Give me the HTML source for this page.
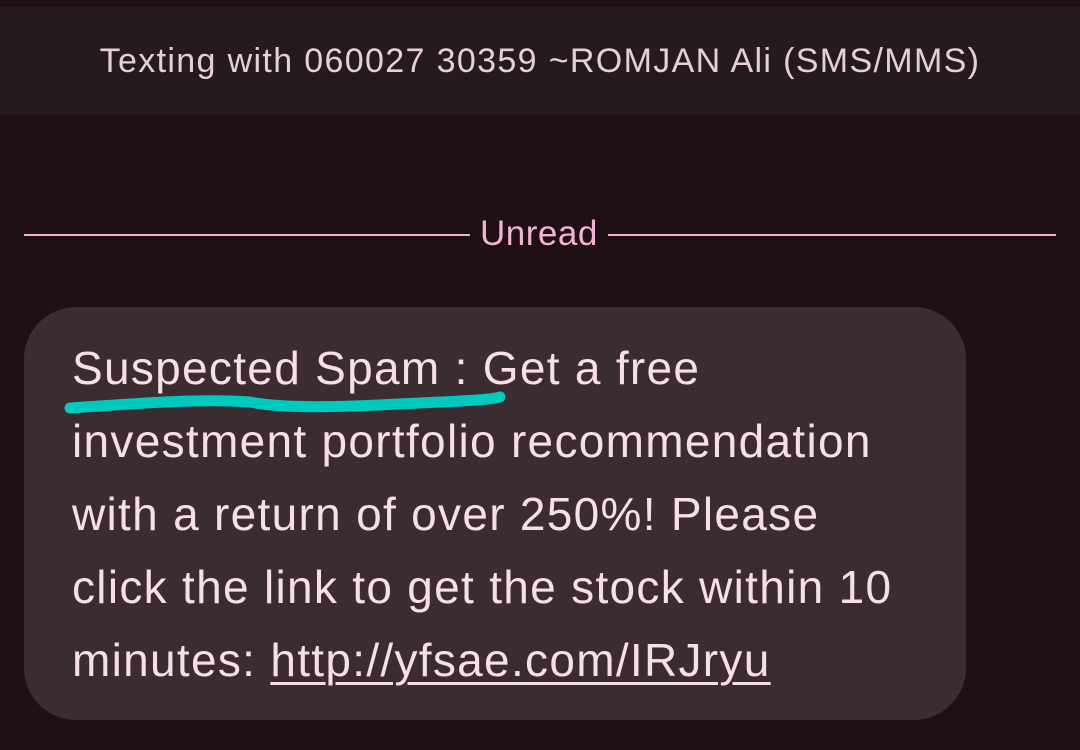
<!DOCTYPE html>
<html><head><style>
body{margin:0;width:1080px;height:750px;background:#1e1015;overflow:hidden;font-family:"Liberation Sans",sans-serif;position:relative}
.hdr{position:absolute;left:0;top:7px;width:1080px;height:108px;background:#251a1f;color:#e6cfd6;font-size:34px;text-align:center;line-height:108px;letter-spacing:1.35px}
.line{position:absolute;top:234px;height:2px;background:#f4b2d2}
.unread{position:absolute;top:214px;left:480px;color:#f4b2d2;font-size:35px;line-height:40px;letter-spacing:0.5px}
.bub{position:absolute;left:24px;top:307px;width:942px;height:413px;background:#3b2c31;border-radius:52px}
.txt{position:absolute;left:72px;top:332px;color:#f6dfe5;font-size:46px;line-height:73px;white-space:pre;letter-spacing:1.3px}
.txt u{text-decoration-thickness:3px;text-underline-offset:6px}
</style></head><body>
<div class="hdr">Texting with 060027 30359 ~ROMJAN Ali (SMS/MMS)</div>
<div class="line" style="left:24px;width:446px"></div>
<div class="unread">Unread</div>
<div class="line" style="left:608px;width:448px"></div>
<div class="bub"></div>
<div class="txt">Suspected Spam : Get a free
investment portfolio recommendation
with a return of over 250%! Please
click the link to get the stock within 10
minutes: <u>http://yfsae.com/IRJryu</u></div>
<svg style="position:absolute;left:0;top:0" width="1080" height="750"><path d="M70 408 C130 404 200 398 250 402 C290 410 360 406 420 403 C460 401 490 400 500 397" stroke="#00c9bd" stroke-width="11" fill="none" stroke-linecap="round"/></svg>
</body></html>
